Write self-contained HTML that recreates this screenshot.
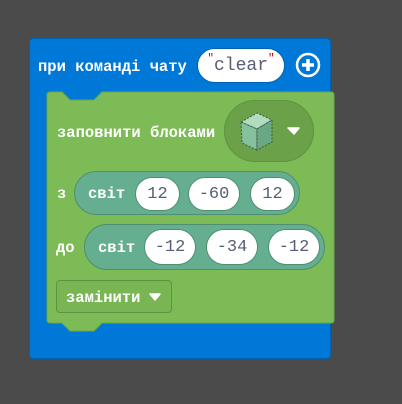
<!DOCTYPE html>
<html><head><meta charset="utf-8"><style>
body{margin:0;width:402px;height:404px;background:#4b4b4b;position:relative;overflow:hidden;font-family:"Liberation Mono",monospace;}
.a{position:absolute;box-sizing:border-box}
.t{position:absolute;color:#fff;font-weight:bold;font-size:15.5px;line-height:16px;white-space:nowrap}
.w{position:absolute;background:#fff;border-radius:18px;color:#575e75;font-size:17px;display:flex;align-items:center;justify-content:center;box-sizing:border-box;border:1px solid #4e8f73}
</style></head><body>
<div class="a" style="left:29px;top:38px;width:302px;height:321px;background:#0078d7;border-radius:4px;border:1px solid #0062b0"></div>
<div class="t" style="left:38px;top:59px">при команді чату</div>
<div class="w" style="left:197px;top:48px;width:88px;height:35px;border-color:#0062b0;font-size:18px"><span style="color:#c00;font-size:11px;position:relative;top:-7px">"</span>clear<span style="color:#c00;font-size:11px;position:relative;top:-7px">"</span></div>
<svg class="a" style="left:295px;top:52px" width="26" height="26"><circle cx="13" cy="13" r="11" fill="none" stroke="#fff" stroke-width="2.5"/><path d="M13 7v12M7 13h12" stroke="#fff" stroke-width="3.5"/></svg>
<svg class="a" style="left:46px;top:91px" width="290" height="243">
<path d="M1 4 Q1 1 4 1 H16 L24 9 H48 L56 1 H285 Q288 1 288 4 V229 Q288 232 285 232 H56 L48 240 H24 L16 232 H4 Q1 232 1 229 Z" fill="#7cbb55" stroke="#6aa847"/>
</svg>
<div class="t" style="left:57px;top:125px">заповнити блоками</div>
<div class="a" style="left:224px;top:100px;width:90px;height:62px;background:#6ba148;border-radius:31px;border:1px solid #5e9340"></div>
<svg class="a" style="left:238px;top:110px" width="40" height="44"><path d="M3 12 L19 3 L34 10 L19 19 Z" fill="#b2dcbe" stroke="#3d5a48" stroke-width="1" stroke-dasharray="2 1.5"/><path d="M3 12 L19 19 L19 40 L4 33 Z" fill="#86c19e" stroke="#3d5a48" stroke-dasharray="2 1.5"/><path d="M19 19 L34 10 L34 32 L19 40 Z" fill="#6aa784" stroke="#3d5a48" stroke-dasharray="2 1.5"/></svg>
<svg class="a" style="left:287px;top:127px" width="13" height="9"><path d="M1 1 H12 L7 7 Z" fill="#fff" stroke="#fff" stroke-linejoin="round" stroke-width="1.5"/></svg>
<div class="t" style="left:57px;top:186px">з</div>
<div class="a" style="left:74px;top:171px;width:226px;height:44px;background:#65ae8f;border-radius:22px;border:1px solid #4e8f73"></div>
<div class="t" style="left:88px;top:186px">світ</div>
<div class="w" style="left:135px;top:177px;width:45px;height:34px">12</div>
<div class="w" style="left:188px;top:177px;width:52px;height:34px">-60</div>
<div class="w" style="left:250px;top:177px;width:45px;height:34px">12</div>
<div class="t" style="left:56px;top:240px">до</div>
<div class="a" style="left:84px;top:224px;width:241px;height:46px;background:#65ae8f;border-radius:23px;border:1px solid #4e8f73"></div>
<div class="t" style="left:98px;top:240px">світ</div>
<div class="w" style="left:144px;top:229px;width:52px;height:36px">-12</div>
<div class="w" style="left:206px;top:229px;width:52px;height:36px">-34</div>
<div class="w" style="left:268px;top:229px;width:52px;height:36px">-12</div>
<div class="a" style="left:56px;top:280px;width:116px;height:33px;background:#79b553;border-radius:4px;border:1px solid #5e9340"></div>
<div class="t" style="left:66px;top:290px">замінити</div>
<svg class="a" style="left:149px;top:293px" width="12" height="9"><path d="M1 1 H11 L6 7 Z" fill="#fff" stroke="#fff" stroke-linejoin="round" stroke-width="1.5"/></svg>
</body></html>
